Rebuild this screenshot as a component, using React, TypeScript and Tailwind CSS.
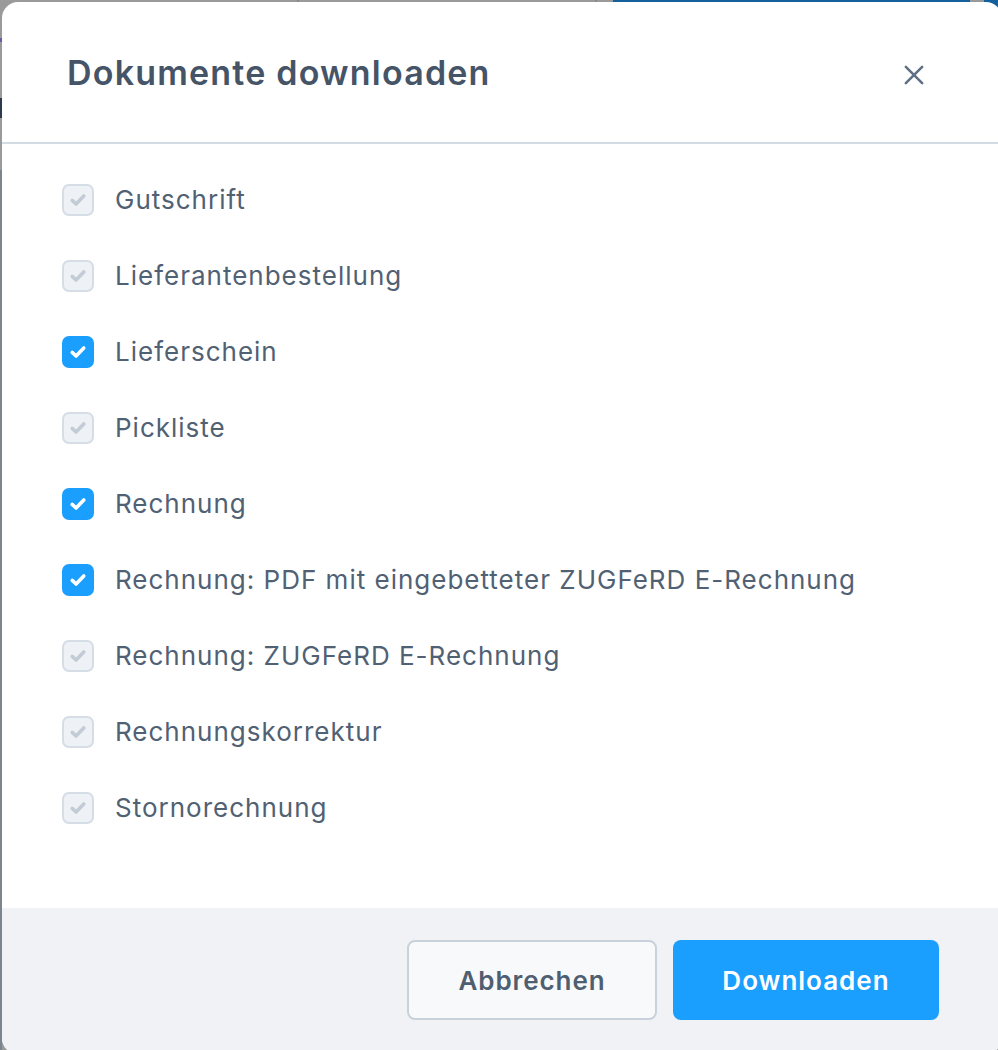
import React, { useState } from 'react';

type DocItem = {
  id: string;
  label: string;
  enabled: boolean;
};

const DOCUMENTS: DocItem[] = [
  { id: 'gutschrift', label: 'Gutschrift', enabled: false },
  { id: 'lieferantenbestellung', label: 'Lieferantenbestellung', enabled: false },
  { id: 'lieferschein', label: 'Lieferschein', enabled: true },
  { id: 'pickliste', label: 'Pickliste', enabled: false },
  { id: 'rechnung', label: 'Rechnung', enabled: true },
  { id: 'rechnung-pdf-zugferd', label: 'Rechnung: PDF mit eingebetteter ZUGFeRD E-Rechnung', enabled: true },
  { id: 'rechnung-zugferd', label: 'Rechnung: ZUGFeRD E-Rechnung', enabled: false },
  { id: 'rechnungskorrektur', label: 'Rechnungskorrektur', enabled: false },
  { id: 'stornorechnung', label: 'Stornorechnung', enabled: false },
];

const CheckMark = ({ className }: { className: string }) => (
  <svg viewBox="0 0 16 16" className={className} fill="none">
    <path d="M3.8 8.3l2.8 2.6 5.6-5.8" stroke="currentColor" strokeWidth="2.6" strokeLinecap="round" strokeLinejoin="round" />
  </svg>
);

const DocCheckbox = ({ item, checked, onToggle }: { item: DocItem; checked: boolean; onToggle: () => void }) => {
  const box = item.enabled
    ? 'bg-[#1a9fff] border-[#1a9fff] text-white'
    : 'bg-[#eef1f5] border-[#d5dde6] text-[#c3ccd6]';

  return (
    <label className="flex h-[76px] items-center gap-[21px] cursor-pointer">
      <button
        type="button"
        disabled={!item.enabled}
        onClick={onToggle}
        className={`flex h-[32px] w-[32px] shrink-0 items-center justify-center rounded-[7px] border-2 ${box}`}
      >
        {checked && <CheckMark className="h-[22px] w-[22px]" />}
      </button>
      <span className="text-[26px] leading-[32px] tracking-[1px] text-[#516174]">{item.label}</span>
    </label>
  );
};

export default function App() {
  const [selected, setSelected] = useState<Record<string, boolean>>(
    Object.fromEntries(DOCUMENTS.map((d) => [d.id, true]))
  );

  const toggle = (id: string) => setSelected((s) => ({ ...s, [id]: !s[id] }));

  return (
    <div className="relative h-[1050px] w-[998px] overflow-hidden bg-[#9a9a9a] font-['Inter','Liberation_Sans',sans-serif]">
      {/* page behind the backdrop */}
      <div className="absolute left-[297px] top-0 h-[2px] w-[2px] bg-[#8a8a8a]" />
      <div className="absolute left-[595px] top-0 h-[2px] w-[2px] bg-[#8a8a8a]" />
      <div className="absolute left-[613px] top-0 h-[2px] w-[357px] bg-[#13609c]" />
      <div className="absolute left-[984px] top-0 h-[8px] w-[14px] bg-[#13609c]" />
      <div className="absolute left-0 top-[38px] h-[4px] w-[2px] bg-[#6b5a9c]" />
      <div className="absolute left-0 top-[98px] h-[20px] w-[2px] bg-[#2c3a4c]" />
      <div className="absolute left-0 top-[170px] bottom-0 w-[2px] bg-[#7c848e]" />

      {/* dialog */}
      <div className="absolute left-[2px] top-[2px] flex h-[1052px] w-[1000px] flex-col overflow-hidden rounded-[16px] bg-white">
        <div className="flex h-[142px] shrink-0 items-center justify-between border-b-2 border-[#d3dce5] pl-[65px] pr-[74px] pt-[2px]">
          <h2 className="text-[34px] font-semibold leading-[40px] tracking-[1.2px] text-[#465467]">Dokumente downloaden</h2>
          <button type="button" className="mt-[4px] flex h-[28px] w-[28px] items-center justify-center text-[#5f7186]">
            <svg viewBox="0 0 24 24" className="h-[28px] w-[28px]" fill="none">
              <path d="M5 5l14 14M19 5L5 19" stroke="currentColor" strokeWidth="2.2" strokeLinecap="round" />
            </svg>
          </button>
        </div>

        <div className="flex flex-1 flex-col pl-[60px] pt-[18px]">
          {DOCUMENTS.map((item) => (
            <DocCheckbox
              key={item.id}
              item={item}
              checked={selected[item.id]}
              onToggle={() => toggle(item.id)}
            />
          ))}
        </div>

        <div className="flex h-[146px] shrink-0 items-start justify-end gap-[16px] bg-[#f0f2f5] pr-[63px] pt-[32px]">
          <button
            type="button"
            className="h-[80px] w-[250px] rounded-[8px] border-2 border-[#c9d1da] bg-[#f8f9fb] text-[26px] font-semibold tracking-[0.9px] text-[#4f5f72]"
          >
            Abbrechen
          </button>
          <button
            type="button"
            className="h-[80px] w-[266px] rounded-[8px] bg-[#1a9fff] text-[26px] font-semibold tracking-[1px] text-white"
          >
            Downloaden
          </button>
        </div>
      </div>
    </div>
  );
}
